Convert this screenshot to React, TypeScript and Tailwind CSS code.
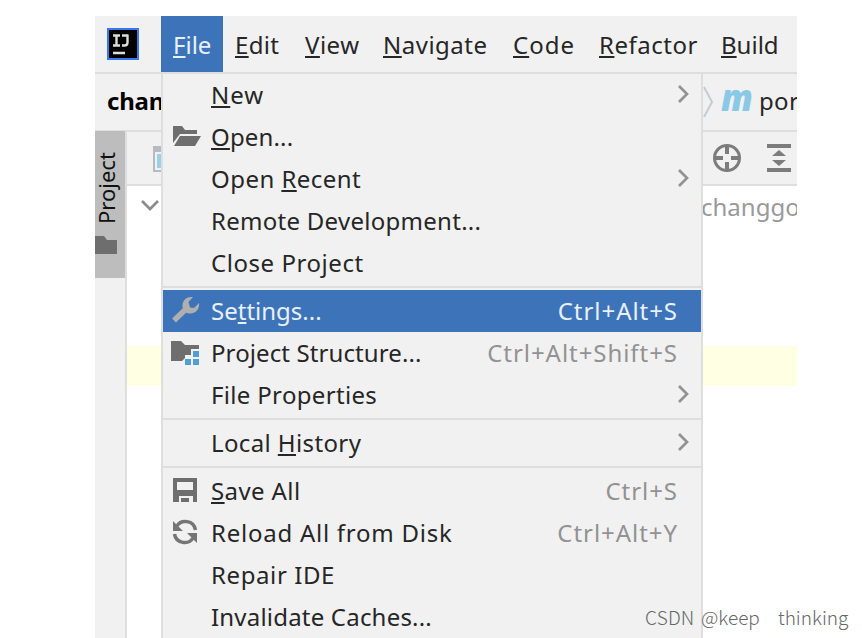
import type { ReactNode } from "react";

const Chevron = () => (
  <svg className="mr-[10px] -mt-[3px] h-5 w-4" viewBox="0 0 16 20" fill="none" stroke="#929292" strokeWidth="2.7">
    <path d="M4 2 L12 10 L4 18" />
  </svg>
);

const FolderOpen = () => (
  <svg className="h-6 w-8" viewBox="0 0 32 24" fill="#6e6e6e">
    <path d="M3 1 H12 L15 5 H27 V9 H10 L3 18 Z" />
    <path d="M10 11 H31 L25 21 H4 Z" />
  </svg>
);

const Wrench = () => (
  <svg className="h-8 w-8" viewBox="0 0 32 32">
    <path d="M4 25.5 L16 14" stroke="#afafaf" strokeWidth="5.5" />
    <path d="M23 2 C15 1 11 7 13 14 L17 18 C23 20 30 16 29 8 L24 13 L20 12.500 L18.500 7 Z" fill="#afafaf" />
  </svg>
);

const Structure = () => (
  <svg className="h-7 w-8" viewBox="0 0 32 28">
    <path d="M1 2 H11 L15 6 H29 V10 H21 V16 H15 V19 L12 22 H1 Z" fill="#6e6e6e" />
    <path d="M23 12h6v6h-6z M15 20h6v6h-6z M23 20h6v6h-6z" fill="#4f9fd6" />
  </svg>
);

const Save = () => (
  <svg className="h-8 w-8" viewBox="0 0 32 32">
    <path d="M3 3 H27 V27 H23 V21 H9 V27 H3 Z M7 7 V15 H23 V7 Z" fill="#6e6e6e" fillRule="evenodd" />
    <path d="M11 23h8v4h-8z" fill="#6e6e6e" />
  </svg>
);

const Reload = () => (
  <svg className="-mt-[2px] h-8 w-8" viewBox="0 0 32 32" fill="none" stroke="#757575" strokeWidth="3.5">
    <path d="M25.5 14 C24 4 11 3 7 10" />
    <path d="M4.5 18 C6 28 19 29 23 22" />
    <path d="M3 5 V15 H13 Z M27 27 V17 H17 Z" fill="#757575" stroke="none" />
  </svg>
);

const K = ({ children }: { children: ReactNode }) => (
  <span className="underline decoration-2 underline-offset-[2px] [text-decoration-skip-ink:none]">{children}</span>
);

type RowProps = {
  icon?: ReactNode;
  children: ReactNode;
  shortcut?: string;
  sub?: boolean;
  active?: boolean;
  track?: string;
};

const Row = ({ icon, children, shortcut, sub, active, track = "" }: RowProps) => (
  <div className={`flex h-[42px] items-center ${active ? "bg-[#3d74b9] text-[#e8f0fa]" : "text-[#262626]"}`}>
    <span className="ml-[7px] flex w-[41px] shrink-0 items-center">{icon}</span>
    <span className={`whitespace-pre ${track}`}>{children}</span>
    <span className="flex-1" />
    {shortcut && (
      <span className={`mr-[23px] whitespace-pre tracking-[0.95px] ${active ? "" : "text-[#929292]"}`}>{shortcut}</span>
    )}
    {sub && <Chevron />}
  </div>
);

const Separator = () => (
  <div className="flex h-[6px] items-center">
    <div className="h-[2px] w-full bg-[#dedede]" />
  </div>
);

export default function App() {
  return (
    <div className="relative h-[638px] w-[862px] overflow-hidden bg-white pl-[95px] pt-4 font-['Noto_Sans',sans-serif] text-[24px] leading-[42px] text-[#262626]">
      <div className="relative flex h-[622px] w-[702px] flex-col overflow-hidden bg-[#f1f1f1]">
        <nav className="flex h-[58px] shrink-0 border-b-2 border-[#dedede] whitespace-pre">
          <div className="flex w-[66px] items-center pl-3">
            <svg className="h-8 w-8" viewBox="0 0 32 32">
              <rect width="32" height="32" fill="#3878eb" />
              <rect x="2" y="2" width="28" height="28" fill="#000" />
              <path d="M6 7.500h7 M9.500 7v11 M6 17.500h7 M15 7.500h6.500 M20.500 7v7.500q0 3-3 3h-2.500" stroke="#ddd" strokeWidth="2.4" fill="none" />
              <path d="M6 25h12" stroke="#ddd" strokeWidth="2.5" />
            </svg>
          </div>
          <div className="h-14 w-[62px] bg-[#3d74b9] pl-[12px] pt-2 text-[#e8f0fa]"><K>F</K>ile</div>
          <div className="w-[70px] pl-3 pt-2 tracking-[0.3px]"><K>E</K>dit</div>
          <div className="w-[78px] pl-3 pt-2 tracking-[0.5px]"><K>V</K>iew</div>
          <div className="w-[130px] pl-3 pt-2 tracking-[0.5px]"><K>N</K>avigate</div>
          <div className="w-[86px] pl-3 pt-2 tracking-[1px]"><K>C</K>ode</div>
          <div className="w-[122px] pl-3 pt-2 tracking-[0.5px]"><K>R</K>efactor</div>
          <div className="pl-3 pt-2"><K>B</K>uild</div>
        </nav>
        <div className="flex h-[58px] shrink-0 items-center justify-between border-b-2 border-[#dedede] whitespace-pre">
          <span className="relative -top-px pl-3 font-bold tracking-[-0.2px] text-black">changgou</span>
          <div className="flex w-[95px] items-center overflow-hidden">
            <svg className="h-8 w-3 shrink-0" viewBox="0 0 12 32" fill="none" stroke="#c6cbcf" strokeWidth="2">
              <path d="M2 1 L10 16 L2 31" />
            </svg>
            <span className="relative -top-[5px] ml-[7px] w-[38px] shrink-0 font-['Open_Sans',sans-serif] text-[37px] leading-[42px] font-extrabold italic text-[#8ac9e6]">
              <span className="inline-block origin-left scale-x-[0.93]">m</span>
            </span>
            <span className="-mt-[2px] tracking-[0.3px]">portal</span>
          </div>
        </div>
        <div className="flex min-h-0 flex-1">
          <aside className="w-8 shrink-0 border-r-2 border-[#dedede]">
            <div className="-mt-px flex h-[147px] flex-col items-start bg-[#bdbdbd]">
              <span className="mt-[16px] h-[77px] w-[22px] rotate-180 whitespace-pre text-[22px] leading-[22px] text-[#111] [writing-mode:vertical-rl]">Project</span>
              <svg className="mt-[11px] h-5 w-6" viewBox="0 0 24 20" fill="#6e6e6e">
                <path d="M0 1 H9 L12 5 H22 V19 H0 Z" />
              </svg>
            </div>
          </aside>
          <main className="flex flex-1 flex-col bg-white">
            <div className="flex h-[54px] shrink-0 items-center border-b-2 border-[#dedede] bg-[#f1f1f1] pl-[26px]">
              <svg className="mt-[2px] h-[26px] w-6" viewBox="0 0 24 26">
                <path d="M0 0h24v26H0z" fill="#b5bbc0" />
                <path d="M2 6h22v18H2z" fill="#f1f1f1" />
                <path d="M4 8h20v14H4z" fill="#9ad0e8" />
              </svg>
              <svg className="ml-[535px] h-8 w-8" viewBox="0 0 32 32" fill="none" stroke="#7c7c7c" strokeWidth="3">
                <circle cx="15" cy="16" r="12.5" />
                <path d="M15 3v9 M15 20v9 M2 16h9 M19 16h9" strokeWidth="4" />
              </svg>
              <svg className="ml-5 h-8 w-8" viewBox="0 0 32 32" fill="#7c7c7c">
                <path d="M3 2h24v4H3z M3 26h24v4H3z M15 8l7 6H8z M15 24l7-6H8z" />
              </svg>
            </div>
            <div className="flex h-[42px] items-center">
              <svg className="-mt-[5px] ml-[13px] h-4 w-5" viewBox="0 0 20 16" fill="none" stroke="#8c8c8c" strokeWidth="2.7">
                <path d="M2 4 L10 12 L18 4" />
              </svg>
              <span className="ml-[541px] text-[#999]">changgou</span>
            </div>
            <div className="mt-[118px] h-10 bg-[#ffffe4]" />
          </main>
        </div>
        <div className="absolute left-[66px] top-[58px] w-[542px] border-x-2 border-[#dedede] bg-[#f1f1f1]">
          <Row sub track="tracking-[1px]"><K>N</K>ew</Row>
          <Row icon={<FolderOpen />} track="tracking-[0.15px]"><K>O</K>pen...</Row>
          <Row sub track="tracking-[0.45px]">Open <K>R</K>ecent</Row>
          <Row track="tracking-[0.28px]">Remote Development...</Row>
          <Row track="tracking-[0.55px]">Close Project</Row>
          <Separator />
          <Row icon={<Wrench />} active shortcut="Ctrl+Alt+S">Se<K>t</K>tings...</Row>
          <Row icon={<Structure />} shortcut="Ctrl+Alt+Shift+S" track="tracking-[0.1px]">Project Structure...</Row>
          <Row sub track="tracking-[0.33px]">File Properties</Row>
          <Separator />
          <Row sub track="tracking-[0.38px]">Local <K>H</K>istory</Row>
          <Separator />
          <Row icon={<Save />} shortcut="Ctrl+S" track="tracking-[0.4px]"><K>S</K>ave All</Row>
          <Row icon={<Reload />} shortcut="Ctrl+Alt+Y" track="tracking-[0.75px]">Reload All from Disk</Row>
          <Row track="tracking-[0.6px]">Repair IDE</Row>
          <Row track="tracking-[0.2px]">Invalidate Caches...</Row>
        </div>
      </div>
      <div className="absolute left-[645px] top-[605px] flex whitespace-pre font-['Noto_Sans_CJK_SC',sans-serif] text-[19px] leading-6 font-light text-[#666]">
        <span className="w-14 tracking-[0.2px]">CSDN</span>
        <span className="w-[77px]">@keep</span>
        <span>thinking</span>
      </div>
    </div>
  );
}
